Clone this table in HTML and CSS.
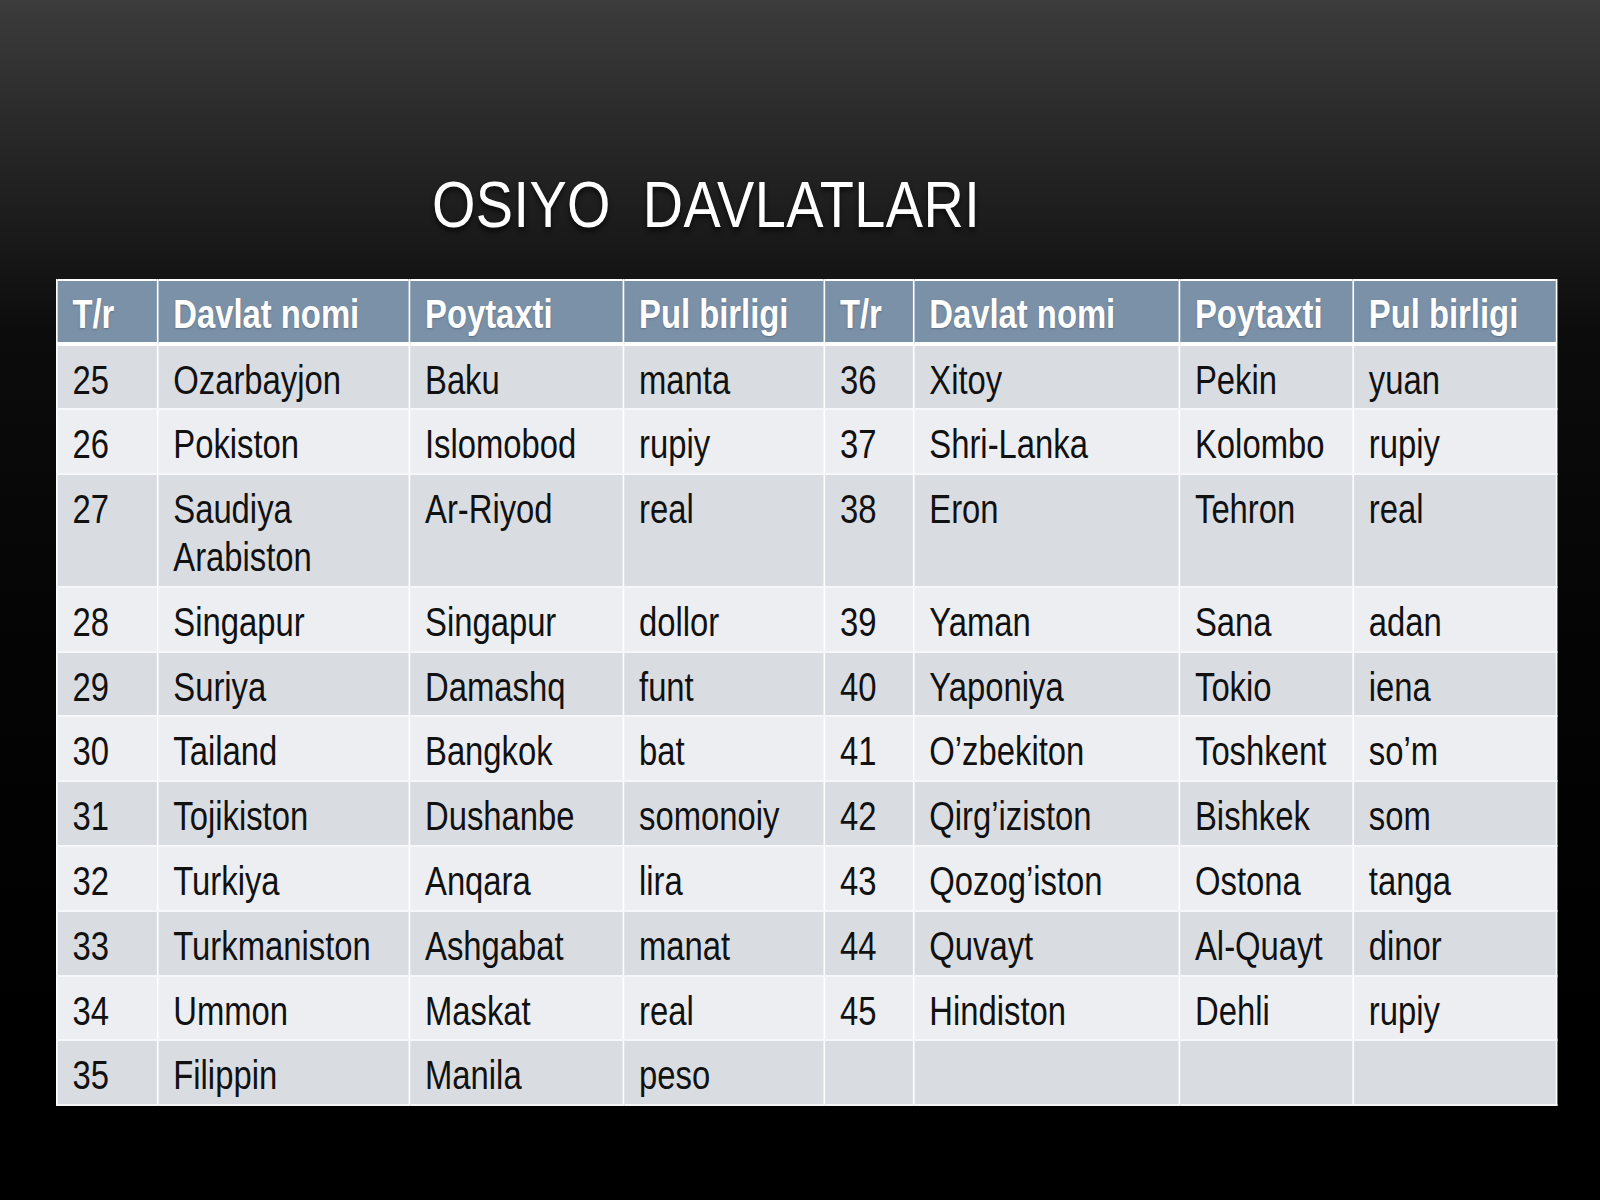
FILE: index.html
```html
<!DOCTYPE html>
<html lang="uz">
<head>
<meta charset="utf-8">
<title>Osiyo davlatlari</title>
<link rel="stylesheet" href="styles.css">
</head>
<body>
<div class="slide">
  <h1 class="title"><span class="title-text">OSIYO&nbsp; DAVLATLARI</span></h1>
  <div class="table-wrap">
  <table class="grid">
    <colgroup>
      <col class="c1"><col class="c2"><col class="c3"><col class="c4">
      <col class="c5"><col class="c6"><col class="c7"><col class="c8">
    </colgroup>
    <thead>
      <tr><th>T/r</th><th>Davlat nomi</th><th>Poytaxti</th><th>Pul birligi</th><th>T/r</th><th>Davlat nomi</th><th>Poytaxti</th><th>Pul birligi</th></tr>
    </thead>
    <tbody>
      <tr><td>25</td><td>Ozarbayjon</td><td>Baku</td><td>manta</td><td>36</td><td>Xitoy</td><td>Pekin</td><td>yuan</td></tr>
      <tr><td>26</td><td>Pokiston</td><td>Islomobod</td><td>rupiy</td><td>37</td><td>Shri-Lanka</td><td>Kolombo</td><td>rupiy</td></tr>
      <tr><td>27</td><td>Saudiya<br>Arabiston</td><td>Ar-Riyod</td><td>real</td><td>38</td><td>Eron</td><td>Tehron</td><td>real</td></tr>
      <tr><td>28</td><td>Singapur</td><td>Singapur</td><td>dollor</td><td>39</td><td>Yaman</td><td>Sana</td><td>adan</td></tr>
      <tr><td>29</td><td>Suriya</td><td>Damashq</td><td>funt</td><td>40</td><td>Yaponiya</td><td>Tokio</td><td>iena</td></tr>
      <tr><td>30</td><td>Tailand</td><td>Bangkok</td><td>bat</td><td>41</td><td>O’zbekiton</td><td>Toshkent</td><td>so’m</td></tr>
      <tr><td>31</td><td>Tojikiston</td><td>Dushanbe</td><td>somonoiy</td><td>42</td><td>Qirg’iziston</td><td>Bishkek</td><td>som</td></tr>
      <tr><td>32</td><td>Turkiya</td><td>Anqara</td><td>lira</td><td>43</td><td>Qozog’iston</td><td>Ostona</td><td>tanga</td></tr>
      <tr><td>33</td><td>Turkmaniston</td><td>Ashgabat</td><td>manat</td><td>44</td><td>Quvayt</td><td>Al-Quayt</td><td>dinor</td></tr>
      <tr><td>34</td><td>Ummon</td><td>Maskat</td><td>real</td><td>45</td><td>Hindiston</td><td>Dehli</td><td>rupiy</td></tr>
      <tr><td>35</td><td>Filippin</td><td>Manila</td><td>peso</td><td></td><td></td><td></td><td></td></tr>
    </tbody>
  </table>
  </div>
</div>
</body>
</html>
```

FILE: styles.css
```css
html, body {
  margin: 0;
  padding: 0;
}
body {
  width: 1600px;
  height: 1200px;
  overflow: hidden;
  background: linear-gradient(to bottom, #3c3c3c 0px, #2a2a2a 120px, #181818 250px, #0c0c0c 330px, #050505 600px, #000000 1000px);
  font-family: "Liberation Sans", Arial, sans-serif;
}
.slide {
  padding-top: 173px;
}
.title {
  margin: 0 0 42px 0;
  padding-left: 432px;
  font-family: "Liberation Sans", Arial, sans-serif;
  font-weight: normal;
  font-size: 64px;
  line-height: 64px;
  color: #ffffff;
  white-space: nowrap;
}
.title-text {
  display: inline-block;
  letter-spacing: 0.5px;
  transform: scaleX(0.872);
  transform-origin: left top;
  text-shadow: 0 4px 6px rgba(0, 0, 0, 0.6);
}
.table-wrap {
  margin-left: 56px;
  width: 1500px;
}
.grid {
  width: 1829px;
  border-collapse: collapse;
  table-layout: fixed;
  border: 2.5px solid #ffffff;
  transform: scaleX(0.82);
  transform-origin: left top;
}
.c1 { width: 123px; }
.c2 { width: 307px; }
.c3 { width: 261px; }
.c4 { width: 245px; }
.c5 { width: 109px; }
.c6 { width: 324px; }
.c7 { width: 212px; }
.c8 { width: 248px; }
.grid th, .grid td {
  text-align: left;
  vertical-align: top;
  font-size: 40px;
  line-height: 48px;
  padding: 10px 8px 4.8px 18px;
  border-left: 2.5px solid #ffffff;
  border-right: 2.5px solid #ffffff;
  white-space: nowrap;
}
.grid th {
  background: #7b91a8;
  color: #ffffff;
  font-weight: bold;
  padding-top: 9px;
  padding-bottom: 3.5px;
  border-bottom: 4px solid #ffffff;
  text-shadow: 0 1px 2px rgba(40, 50, 60, 0.35);
}
.grid td {
  color: #111111;
  border-bottom: 2px solid #f6f7f9;
}
.grid tbody tr:nth-child(odd) td {
  background: #d9dde2;
}
.grid tbody tr:nth-child(even) td {
  background: #eceef1;
}
```
